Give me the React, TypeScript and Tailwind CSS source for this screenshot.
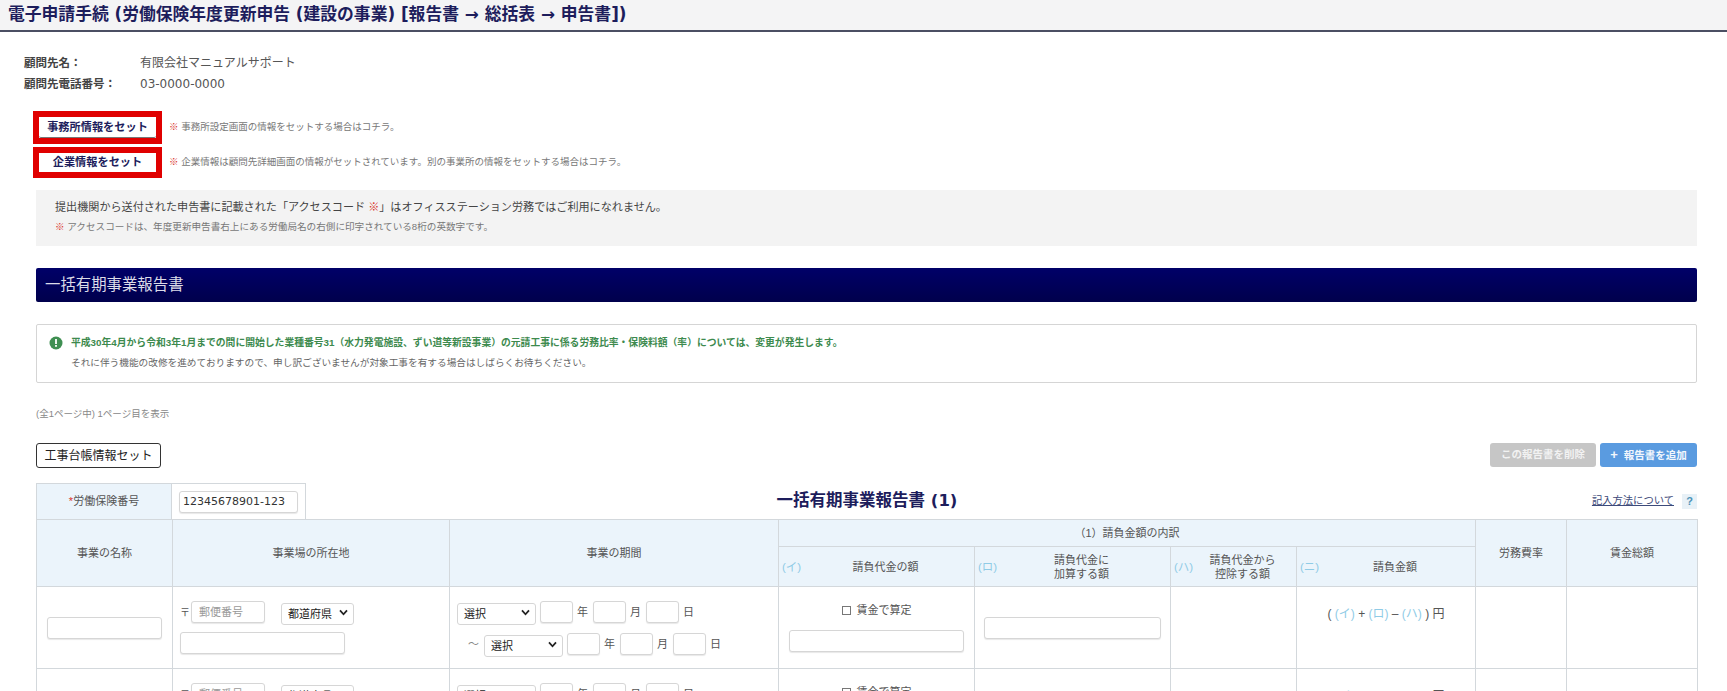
import React from "react";

const font = { fontFamily: '"Liberation Sans", "Noto Sans CJK JP", sans-serif' };

function Input({ className = "", placeholder, value }: { className?: string; placeholder?: string; value?: string }) {
  return (
    <input
      placeholder={placeholder}
      defaultValue={value}
      className={`h-[22px] rounded-[3px] border border-[#d6d6d6] bg-white px-[7px] text-[11px] text-[#333] placeholder:text-[#999] shadow-[0_1px_1px_#e8e8e8] outline-none ${className}`}
    />
  );
}

function Select({ label, className = "" }: { label: string; className?: string }) {
  return (
    <span className={`relative inline-block h-[22px] ${className}`}>
      <select className="h-full w-full appearance-none rounded-[3px] border border-[#d6d6d6] bg-white pl-[6px] text-[11px] text-[#222] outline-none">
        <option>{label}</option>
      </select>
      <svg viewBox="0 0 10 8" className="pointer-events-none absolute right-[6px] top-[8px] h-[7px] w-[9px]">
        <path d="M1 1.5 L5 6 L9 1.5" fill="none" stroke="#222" strokeWidth="2" />
      </svg>
    </span>
  );
}

function Unit({ children, last }: { children: React.ReactNode; last?: boolean }) {
  return <span className={`ml-[4px] w-[11px] text-[11px] leading-[14px] text-[#555] ${last ? "" : "mr-[5px]"}`}>{children}</span>;
}

function Mark({ children }: { children: React.ReactNode }) {
  return <span className="text-[#8fcbe6]">{children}</span>;
}

function SubHead({ mark, children }: { mark: string; children: React.ReactNode }) {
  return (
    <th className="border border-[#d3d8dc] bg-[#ebf4fb] p-0 font-normal">
      <div className="flex items-center pl-[3px] pr-[4px] text-[11px] leading-[14px] text-[#555]">
        <span className="text-[11.5px] text-[#8fcbe6]">{mark}</span>
        <span className="flex-1 text-center">{children}</span>
      </div>
    </th>
  );
}

function DateLine() {
  return (
    <>
      <Select label="選択" className="w-[79px]" />
      <Input className="ml-[4px] w-[33px]" />
      <Unit>年</Unit>
      <Input className="w-[33px]" />
      <Unit>月</Unit>
      <Input className="w-[33px]" />
      <Unit last>日</Unit>
    </>
  );
}

function DataRow() {
  return (
    <tr className="h-[82px]">
      <td className="border border-[#d3d8dc] px-[10px]">
        <Input className="block w-full" />
      </td>
      <td className="border border-[#d3d8dc] px-[7px]">
        <div className="flex items-center">
          <span className="w-[11px] text-[10px] text-[#555]">〒</span>
          <Input className="w-[74px]" placeholder="郵便番号" />
          <Select label="都道府県" className="ml-[16px] w-[73px]" />
        </div>
        <Input className="mt-[9px] block w-[165px]" />
      </td>
      <td className="border border-[#d3d8dc] px-[7px]">
        <div className="flex items-center">
          <DateLine />
        </div>
        <div className="mt-[10px] flex items-center pl-[11px]">
          <span className="mr-[5px] w-[11px] text-[11px] leading-[14px] text-[#888]">～</span>
          <DateLine />
        </div>
      </td>
      <td className="border border-[#d3d8dc] px-[10px] text-center">
        <div className="flex items-center justify-center text-[11px] leading-[14px] text-[#555]">
          <span className="mr-[6px] inline-block h-[9px] w-[9px] border border-[#777]" />
          賃金で算定
        </div>
        <Input className="mt-[13px] block w-full" />
      </td>
      <td className="border border-[#d3d8dc] px-[9px]">
        <Input className="block w-full" />
      </td>
      <td className="border border-[#d3d8dc]" />
      <td className="border border-[#d3d8dc] pb-[28px] text-center text-[12px] text-[#555]">
        ( <Mark>(イ)</Mark> + <Mark>(ロ)</Mark> – <Mark>(ハ)</Mark> ) 円
      </td>
      <td className="border border-[#d3d8dc]" />
      <td className="border border-[#d3d8dc]" />
    </tr>
  );
}

export default function App() {
  return (
    <div className="h-screen overflow-hidden bg-white" style={font}>
      <header className="flex h-[32px] items-center border-b-2 border-[#4b4f63] bg-[#f4f4f5] pl-[8px] font-['DejaVu_Sans','Noto_Sans_CJK_JP',sans-serif] text-[16.8px] font-bold text-[#1d1d5c]">
        電子申請手続 (労働保険年度更新申告 (建設の事業) [報告書 → 総括表 → 申告書])
      </header>

      <main className="pl-[36px] pr-[30px] pt-[24px]">
        <dl className="-ml-[12px] grid grid-cols-[116px_1fr] gap-y-[6px] text-[11.5px] leading-[15px]">
          <dt className="font-bold text-[#444]">顧問先名：</dt>
          <dd className="text-[12px] text-[#555]">有限会社マニュアルサポート</dd>
          <dt className="font-bold text-[#444]">顧問先電話番号：</dt>
          <dd className="font-['DejaVu_Sans'] text-[12px] text-[#555]">03-0000-0000</dd>
        </dl>

        <div className="mt-[19px] flex items-center">
          <div className="-ml-[3px] border-[6px] border-[#e00000]">
            <button className="flex h-[21px] w-[117px] items-center justify-center rounded-[2px] border-b border-[#777] bg-white text-[11.2px] font-bold text-[#1d1d5c]">
              事務所情報をセット
            </button>
          </div>
          <p className="ml-[7px] text-[9.5px] text-[#777]"><span className="text-[#d9342b]">※</span> 事務所設定画面の情報をセットする場合はコチラ。</p>
        </div>
        <div className="mt-[3px] flex items-center">
          <div className="-ml-[3px] border-[6px] border-[#e00000]">
            <button className="flex h-[19px] w-[117px] items-center justify-center rounded-[2px] bg-white text-[11.2px] font-bold text-[#1d1d5c]">
              企業情報をセット
            </button>
          </div>
          <p className="ml-[7px] text-[9.5px] text-[#777]"><span className="text-[#d9342b]">※</span> 企業情報は顧問先詳細画面の情報がセットされています。別の事業所の情報をセットする場合はコチラ。</p>
        </div>

        <section className="mt-[12px] h-[56px] bg-[#f3f3f3] pl-[19px] pt-[10px]">
          <p className="text-[11.1px] leading-[15px] text-[#444]">
            提出機関から送付された申告書に記載された「アクセスコード <span className="text-[#d9342b]">※</span>」はオフィスステーション労務ではご利用になれません。
          </p>
          <p className="mt-[6px] text-[9.6px] leading-[12px] text-[#777]">
            <span className="text-[#d9342b]">※</span> アクセスコードは、年度更新申告書右上にある労働局名の右側に印字されている8桁の英数字です。
          </p>
        </section>

        <h2 className="mt-[22px] flex h-[34px] items-center rounded-[2px] bg-gradient-to-b from-[#000068] to-[#00004c] pl-[9px] text-[15.4px] font-normal text-[#dcdce8]">
          一括有期事業報告書
        </h2>

        <section className="mt-[22px] h-[59px] rounded-[2px] border border-[#d5d5d5] pl-[12px] pt-[11px]">
          <p className="flex items-center text-[9.8px] font-bold leading-[14px] text-[#3d8a4e]">
            <svg viewBox="0 0 14 14" className="mr-[8px] h-[14px] w-[14px]">
              <circle cx="7" cy="7" r="6.5" fill="#3f8f52" />
              <rect x="6.1" y="3" width="1.8" height="5" fill="#fff" />
              <rect x="6.1" y="9" width="1.8" height="1.8" fill="#fff" />
            </svg>
            平成30年4月から令和3年1月までの間に開始した業種番号31（水力発電施設、ずい道等新設事業）の元請工事に係る労務比率・保険料額（率）については、変更が発生します。
          </p>
          <p className="mt-[6px] pl-[22px] text-[9.66px] leading-[14px] text-[#666]">
            それに伴う機能の改修を進めておりますので、申し訳ございませんが対象工事を有する場合はしばらくお待ちください。
          </p>
        </section>

        <p className="mt-[25px] text-[9.5px] leading-[12px] text-[#888]">(全1ページ中) 1ページ目を表示</p>

        <div className="mt-[23px] flex items-start justify-between">
          <button className="h-[25px] w-[125px] rounded-[3px] border border-[#333] bg-white text-[12px] text-[#222]">工事台帳情報セット</button>
          <div className="flex gap-[4px]">
            <button className="h-[24px] w-[106px] rounded-[3px] bg-[#c6c6c6] text-[10.5px] font-bold text-[#f2f2f2]">この報告書を削除</button>
            <button className="h-[24px] w-[97px] rounded-[3px] bg-[#5a9be0] text-[10.5px] font-bold text-[#f2f7fd]">
              <span className="mr-[6px] text-[13px]">+</span>報告書を追加
            </button>
          </div>
        </div>

        <div className="mt-[15px] grid h-[36px] grid-cols-[136px_134px_1122px_1fr] items-stretch">
          <div className="flex items-center justify-center border border-b-0 border-[#d3d8dc] bg-[#ebf4fb] text-[11px] text-[#555]">
            <span className="text-[#d9342b]">*</span>労働保険番号
          </div>
          <div className="flex items-center border border-b-0 border-l-0 border-[#d3d8dc] pl-[7px]">
            <Input className="w-[119px] pl-[3px] pr-0 font-['DejaVu_Sans'] text-[11px]" value="12345678901-123" />
          </div>
          <div className="flex items-center justify-center font-['DejaVu_Sans','Noto_Sans_CJK_JP',sans-serif] text-[16.5px] font-bold text-[#1d1d5c]">
            一括有期事業報告書 (1)
          </div>
          <div className="flex items-center justify-end text-[10.3px] text-[#3d4a7a]">
            <a className="underline">記入方法について</a>
            <span className="ml-[8px] flex h-[15px] w-[15px] items-center justify-center bg-[#e8f1f7] text-[11px] font-bold text-[#4d93b8]">?</span>
          </div>
        </div>

        <table className="w-[1661px] table-fixed border-collapse">
          <colgroup>
            <col className="w-[136px]" />
            <col className="w-[277px]" />
            <col className="w-[329px]" />
            <col className="w-[196px]" />
            <col className="w-[196px]" />
            <col className="w-[126px]" />
            <col className="w-[179px]" />
            <col className="w-[91px]" />
            <col className="w-[131px]" />
          </colgroup>
          <thead>
            <tr className="h-[27px] text-[11px] text-[#555]">
              <th rowSpan={2} className="border border-[#d3d8dc] bg-[#ebf4fb] font-normal">事業の名称</th>
              <th rowSpan={2} className="border border-[#d3d8dc] bg-[#ebf4fb] font-normal">事業場の所在地</th>
              <th rowSpan={2} className="border border-[#d3d8dc] bg-[#ebf4fb] font-normal">事業の期間</th>
              <th colSpan={4} className="border border-[#d3d8dc] bg-[#ebf4fb] font-normal">（1）請負金額の内訳</th>
              <th rowSpan={2} className="border border-[#d3d8dc] bg-[#ebf4fb] font-normal">労務費率</th>
              <th rowSpan={2} className="border border-[#d3d8dc] bg-[#ebf4fb] font-normal">賃金総額</th>
            </tr>
            <tr className="h-[40px]">
              <SubHead mark="(イ)">請負代金の額</SubHead>
              <SubHead mark="(ロ)">請負代金に<br />加算する額</SubHead>
              <SubHead mark="(ハ)">請負代金から<br />控除する額</SubHead>
              <SubHead mark="(ニ)">請負金額</SubHead>
            </tr>
          </thead>
          <tbody>
            <DataRow />
            <DataRow />
          </tbody>
        </table>
      </main>
    </div>
  );
}
